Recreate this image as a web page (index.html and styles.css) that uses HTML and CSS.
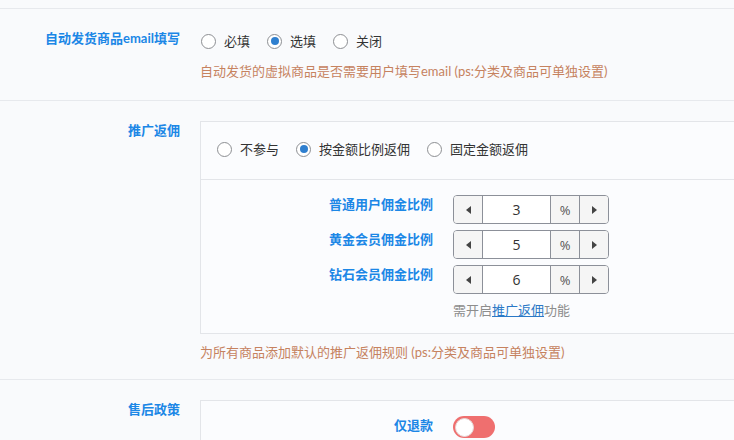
FILE: index.html
```html
<!DOCTYPE html>
<html lang="zh-CN">
<head>
<meta charset="utf-8">
<title>设置</title>
<link rel="stylesheet" href="styles.css">
</head>
<body>
<div class="page">
  <div class="row first">
    <div class="label">自动发货商品email填写</div>
    <div class="content">
      <div class="radios">
        <label class="opt"><span class="radio"></span>必填</label>
        <label class="opt"><span class="radio on"></span>选填</label>
        <label class="opt"><span class="radio"></span>关闭</label>
      </div>
      <div class="help">自动发货的虚拟商品是否需要用户填写email (ps:分类及商品可单独设置)</div>
    </div>
  </div>

  <div class="row">
    <div class="label">推广返佣</div>
    <div class="content">
      <div class="panel">
        <div class="panel-head">
          <div class="radios">
            <label class="opt"><span class="radio"></span>不参与</label>
            <label class="opt"><span class="radio on"></span>按金额比例返佣</label>
            <label class="opt"><span class="radio"></span>固定金额返佣</label>
          </div>
        </div>
        <div class="panel-body">
          <div class="field">
            <div class="flabel">普通用户佣金比例</div>
            <div class="spinner">
              <span class="btn"><span class="tri-l"></span></span>
              <span class="val">3</span>
              <span class="addon">%</span>
              <span class="btn"><span class="tri-r"></span></span>
            </div>
          </div>
          <div class="field">
            <div class="flabel">黄金会员佣金比例</div>
            <div class="spinner">
              <span class="btn"><span class="tri-l"></span></span>
              <span class="val">5</span>
              <span class="addon">%</span>
              <span class="btn"><span class="tri-r"></span></span>
            </div>
          </div>
          <div class="field">
            <div class="flabel">钻石会员佣金比例</div>
            <div class="spinner">
              <span class="btn"><span class="tri-l"></span></span>
              <span class="val">6</span>
              <span class="addon">%</span>
              <span class="btn"><span class="tri-r"></span></span>
            </div>
          </div>
          <div class="field note-field">
            <div class="flabel"></div>
            <div class="note">需开启<a href="#" class="link">推广返佣</a>功能</div>
          </div>
        </div>
      </div>
      <div class="help">为所有商品添加默认的推广返佣规则 (ps:分类及商品可单独设置)</div>
    </div>
  </div>

  <div class="row">
    <div class="label">售后政策</div>
    <div class="content">
      <div class="panel">
        <div class="panel-body">
          <div class="field">
            <div class="flabel">仅退款</div>
            <span class="switch"><span class="knob"></span></span>
          </div>
        </div>
      </div>
    </div>
  </div>
</div>
</body>
</html>
```

FILE: styles.css
```css
html, body {
  margin: 0;
  padding: 0;
  background: #f9fafc;
  overflow: hidden;
}

body {
  font-family: "Lato", "Noto Sans CJK SC", sans-serif;
  font-size: 13px;
  color: #333;
}

.page {
  padding-top: 8px;
}

.row {
  display: flex;
  gap: 20px;
  padding: 20px 0 17px;
  border-top: 1px solid #e7e9ed;
}

.row.first {
  padding-bottom: 19px;
}

.label {
  flex: 0 0 180px;
  text-align: right;
  font-weight: bold;
  color: #1c87e6;
  line-height: 19px;
}

.content {
  flex: 1;
  min-width: 0;
}

.radios {
  display: flex;
  align-items: center;
  height: 24px;
  gap: 16px;
}

.opt {
  display: flex;
  align-items: center;
  gap: 8px;
  color: #333;
  line-height: 20px;
}

.radio {
  box-sizing: border-box;
  width: 15px;
  height: 15px;
  margin-left: 1px;
  border: 1px solid #8d8f93;
  border-radius: 50%;
  background: #fff;
  display: flex;
  align-items: center;
  justify-content: center;
}

.radio.on::after {
  content: "";
  width: 8px;
  height: 8px;
  border-radius: 50%;
  background: #2f7fcf;
}

.help {
  margin-top: 8px;
  line-height: 20px;
  color: #c6825f;
  white-space: nowrap;
}

.panel {
  width: 640px;
  border: 1px solid #e3e5e9;
  background: #fbfcfe;
}

.panel-head {
  padding: 15px 15px 18px;
  border-bottom: 1px solid #e3e5e9;
}

.panel-body {
  padding: 15px 16px 13px;
}

.field {
  display: flex;
  gap: 20px;
}

.field + .field {
  margin-top: 6px;
}

.flabel {
  flex: 0 0 216px;
  text-align: right;
  font-weight: bold;
  color: #1c87e6;
  line-height: 18px;
}

.spinner {
  display: flex;
  box-sizing: border-box;
  width: 156px;
  height: 29px;
  border: 1px solid #8c9099;
  border-radius: 4px;
  overflow: hidden;
  background: #fff;
}

.btn {
  flex: 0 0 28px;
  background: #f5f5f5;
  display: flex;
  align-items: center;
  justify-content: center;
}

.btn:first-child {
  border-right: 1px solid #8c9099;
}

.btn:last-child {
  border-left: 1px solid #8c9099;
}

.tri-l {
  width: 0;
  height: 0;
  border-top: 4.5px solid transparent;
  border-bottom: 4.5px solid transparent;
  border-right: 5px solid #444;
}

.tri-r {
  width: 0;
  height: 0;
  border-top: 4.5px solid transparent;
  border-bottom: 4.5px solid transparent;
  border-left: 5px solid #444;
}

.val {
  flex: 1;
  display: flex;
  align-items: center;
  justify-content: center;
  font-family: "Open Sans", "Noto Sans CJK SC", sans-serif;
  font-size: 14px;
  color: #333;
  background: #fff;
}

.addon {
  flex: 0 0 28px;
  border-left: 1px solid #8c9099;
  background: #f5f5f5;
  display: flex;
  align-items: center;
  justify-content: center;
  font-family: "Open Sans", "Noto Sans CJK SC", sans-serif;
  color: #555;
  font-size: 13px;
}

.note {
  line-height: 20px;
  color: #8d8d8d;
}

.link {
  color: #2a78c6;
  text-decoration: underline;
}

.switch {
  box-sizing: border-box;
  width: 42px;
  height: 22px;
  border-radius: 11px;
  background: #ef6f6f;
  padding: 1px 2px;
  display: flex;
  align-items: center;
}

.knob {
  box-sizing: border-box;
  width: 19px;
  height: 19px;
  border-radius: 50%;
  background: #fff;
  border: 1px solid #e6d8d8;
}
```
